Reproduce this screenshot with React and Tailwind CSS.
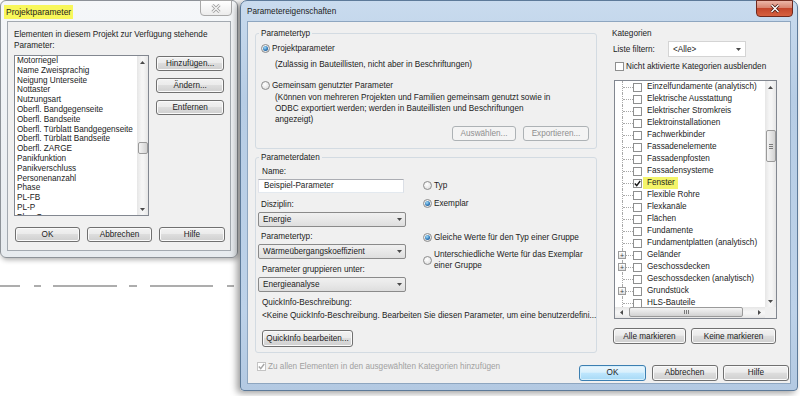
const leftItems = [
  "Motorriegel",
  "Name Zweisprachig",
  "Neigung Unterseite",
  "Nottaster",
  "Nutzungsart",
  "Oberfl. Bandgegenseite",
  "Oberfl. Bandseite",
  "Oberfl. Türblatt Bandgegenseite",
  "Oberfl. Türblatt Bandseite",
  "Oberfl. ZARGE",
  "Panikfunktion",
  "Panikverschluss",
  "Personenanzahl",
  "Phase",
  "PL-FB",
  "PL-P",
  "Plan-Gruppe",
];

const categories = [
  { name: "Einzelfundamente (analytisch)" },
  { name: "Elektrische Ausstattung" },
  { name: "Elektrischer Stromkreis" },
  { name: "Elektroinstallationen" },
  { name: "Fachwerkbinder" },
  { name: "Fassadenelemente" },
  { name: "Fassadenpfosten" },
  { name: "Fassadensysteme" },
  { name: "Fenster", checked: true, marked: true },
  { name: "Flexible Rohre" },
  { name: "Flexkanäle" },
  { name: "Flächen" },
  { name: "Fundamente" },
  { name: "Fundamentplatten (analytisch)" },
  { name: "Geländer", plus: true },
  { name: "Geschossdecken", plus: true },
  { name: "Geschossdecken (analytisch)" },
  { name: "Grundstück", plus: true },
  { name: "HLS-Bauteile" },
];

// small scrollbar / combo arrows
function Tri({ dir }) {
  if (dir === "up")
    return (
      <svg width="5" height="3" viewBox="0 0 5 3">
        <path d="M0 3 L2.5 0 L5 3Z" fill="#4a4a4a" />
      </svg>
    );
  if (dir === "down")
    return (
      <svg width="5" height="3" viewBox="0 0 5 3">
        <path d="M0 0 L5 0 L2.5 3Z" fill="#4a4a4a" />
      </svg>
    );
  if (dir === "left")
    return (
      <svg width="3" height="5" viewBox="0 0 3 5">
        <path d="M3 0 L3 5 L0 2.5Z" fill="#4a4a4a" />
      </svg>
    );
  return (
    <svg width="3" height="5" viewBox="0 0 3 5">
      <path d="M0 0 L3 2.5 L0 5Z" fill="#4a4a4a" />
    </svg>
  );
}

function Button({ children, className = "", disabled, focused }) {
  const look = disabled
    ? "border-[#adb2b5] bg-[#f4f4f4] text-[#8f8f8f]"
    : focused
    ? "border-[#3c7fb1] bg-[linear-gradient(#eaf6fd,#d9f0fc_45%,#bee6fd_50%,#a7d9f5)] shadow-[inset_0_0_0_1px_#d6effc]"
    : "border-[#707070] bg-[linear-gradient(#f2f2f2,#ebebeb_45%,#dddddd_50%,#cfcfcf)] shadow-[inset_0_0_0_1px_#fafafa]";
  return (
    <div
      className={`flex shrink-0 items-center justify-center whitespace-nowrap rounded-[3px] border ${look} ${className}`}
    >
      {children}
    </div>
  );
}

function Radio({ checked }) {
  return (
    <span className="flex h-[9px] w-[9px] shrink-0 items-center justify-center rounded-full border border-[#8c8c8c] bg-[radial-gradient(circle_at_40%_35%,#ffffff,#e4e4e4_70%,#cdcdcd)]">
      {checked && (
        <span className="h-[5px] w-[5px] rounded-full bg-[radial-gradient(circle_at_40%_35%,#a6e0fa,#2b74b5_60%,#15497c)]" />
      )}
    </span>
  );
}

function Check({ checked, disabled }) {
  return (
    <span
      className={`flex h-[9px] w-[9px] shrink-0 items-center justify-center border bg-white ${
        disabled ? "border-[#c4c4c4]" : "border-[#8e8f8f]"
      }`}
    >
      {checked && (
        <svg width="7" height="7" viewBox="0 0 7 7">
          <path
            d="M0.8 3.6 L2.7 5.6 L6.2 1"
            fill="none"
            stroke={disabled ? "#a6a6a6" : "#151515"}
            strokeWidth="1.4"
          />
        </svg>
      )}
    </span>
  );
}

function Combo({ value }) {
  return (
    <div className="flex h-[15px] w-[148px] items-center justify-between rounded-[2px] border border-[#8a8a8a] bg-[linear-gradient(#f0f0f0,#e8e8e8_50%,#dedede)] pl-[4px] pr-[3px]">
      <span className="whitespace-nowrap">{value}</span>
      <Tri dir="down" />
    </div>
  );
}

function VScroll({ thumb, grip }) {
  return (
    <div className="flex h-full w-[11px] shrink-0 flex-col bg-[linear-gradient(90deg,#e6e6e6,#f5f5f5_40%,#f5f5f5_60%,#e6e6e6)]">
      <div className="flex h-[12px] shrink-0 items-center justify-center">
        <Tri dir="up" />
      </div>
      <div className="flex-1">
        <div
          className={`mx-auto flex w-[10px] flex-col items-center justify-center gap-[1px] rounded-[2px] border border-[#9a9a9a] bg-[linear-gradient(90deg,#f4f4f4,#e2e2e2_55%,#d2d2d2)] ${thumb}`}
        >
          {grip && (
            <>
              <span className="h-px w-[4px] bg-[#7a7a7a]" />
              <span className="h-px w-[4px] bg-[#7a7a7a]" />
              <span className="h-px w-[4px] bg-[#7a7a7a]" />
            </>
          )}
        </div>
      </div>
      <div className="flex h-[12px] shrink-0 items-center justify-center">
        <Tri dir="down" />
      </div>
    </div>
  );
}

function HScroll() {
  return (
    <div className="flex h-[11px] flex-1 bg-[linear-gradient(#e6e6e6,#f5f5f5_40%,#f5f5f5_60%,#e6e6e6)]">
      <div className="flex w-[12px] shrink-0 items-center justify-center">
        <Tri dir="left" />
      </div>
      <div className="flex-1">
        <div className="ml-[2px] flex h-[10px] w-[114px] items-center justify-center gap-[1px] rounded-[2px] border border-[#9a9a9a] bg-[linear-gradient(#f4f4f4,#e2e2e2_55%,#d2d2d2)]">
          <span className="h-[4px] w-px bg-[#7a7a7a]" />
          <span className="h-[4px] w-px bg-[#7a7a7a]" />
          <span className="h-[4px] w-px bg-[#7a7a7a]" />
        </div>
      </div>
      <div className="flex w-[12px] shrink-0 items-center justify-center">
        <Tri dir="right" />
      </div>
    </div>
  );
}

function CloseX({ active }) {
  return (
    <svg width="10" height="9" viewBox="0 0 10 9">
      <path
        d="M1.5 1 L8.5 8 M8.5 1 L1.5 8"
        stroke={active ? "#4a1d14" : "#9c9c9c"}
        strokeWidth="3"
      />
      <path
        d="M1.5 1 L8.5 8 M8.5 1 L1.5 8"
        stroke={active ? "#ffffff" : "#f4f4f4"}
        strokeWidth="1.4"
      />
    </svg>
  );
}

function CategoryRow({ item }) {
  return (
    <div className="flex h-[12px] shrink-0 items-center">
      <span className="relative flex h-full w-[18px] shrink-0 items-center pl-[7px]">
        <span className="flex h-full w-[11px] items-center border-l border-dotted border-[#a8a8a8]">
          <span className="w-full border-t border-dotted border-[#a8a8a8]" />
        </span>
        {item.plus && (
          <span className="absolute left-[3px] top-[2px] flex h-[8px] w-[8px] items-center justify-center border border-[#9b9b9b] bg-[linear-gradient(#ffffff,#e0e0e0)] text-[7px] leading-none text-[#3c3c3c]">
            +
          </span>
        )}
      </span>
      <Check checked={item.checked} />
      <span
        className={`ml-[5px] whitespace-nowrap leading-[12px] ${
          item.marked ? "-ml-[0px] bg-[#f3f46a] pl-[0px] pr-[3px] shadow-[-4px_0_0_#f3f46a]" : ""
        }`}
      >
        {item.name}
      </span>
    </div>
  );
}

export default function App() {
  return (
    <div className="relative h-[396px] w-[800px] overflow-hidden bg-white font-['Liberation_Sans',Arial,sans-serif] text-[8.2px] leading-[11px] text-[#1c1c1c]">
      {/* background drawing line */}
      <svg className="absolute left-0 top-[284px]" width="240" height="4" viewBox="0 0 240 4">
        <path
          d="M0 2H20 M34 2H41 M53 2H117 M129 2H137 M150 2H213 M227 2H234"
          stroke="#5c5c5c"
          strokeWidth="1.2"
        />
      </svg>

      {/* Projektparameter dialog */}
      <div className="absolute left-0 top-0 flex h-[258px] w-[238px] flex-col rounded-[6px] border border-[#8d9298] bg-[linear-gradient(#f5f7f9,#e7ebef)] shadow-[1px_2px_5px_rgba(0,0,0,0.3)]">
        <div className="flex h-[20px] shrink-0 items-start justify-between pl-[3px] pr-[5px]">
          <span className="mt-[4px] bg-[#f8f75a] px-[2px] text-[8.5px] leading-[14px]">
            Projektparameter
          </span>
          <div className="-mt-[1px] flex h-[16px] w-[32px] items-center justify-center rounded-b-[4px] border border-[#a9a9a9] bg-[linear-gradient(#ffffff,#ececec)]">
            <CloseX />
          </div>
        </div>
        <div className="mx-[6px] mb-[6px] flex flex-1 flex-col border border-[#a3a9b0] bg-[#f0f0f0] px-[6px] pt-[7px]">
          <p>
            Elementen in diesem Projekt zur Verfügung stehende
            <br />
            Parameter:
          </p>
          <div className="mt-[4px] flex items-start">
            <div className="flex h-[161px] w-[136px] border border-[#828790] bg-white">
              <div className="flex-1 overflow-hidden pl-[2px] leading-[9.8px]">
                {leftItems.map((item) => (
                  <div key={item} className="whitespace-nowrap">
                    {item}
                  </div>
                ))}
              </div>
              <VScroll thumb="mt-[74px] h-[12px]" />
            </div>
            <div className="ml-[7px] flex w-[68px] flex-col gap-[7px] pt-[1px]">
              <Button className="h-[15px]">Hinzufügen...</Button>
              <Button className="h-[15px]">Ändern...</Button>
              <Button className="h-[15px]">Entfernen</Button>
            </div>
          </div>
          <div className="mt-[11px] flex gap-[7px] pl-[1px]">
            <Button className="h-[15px] w-[65px]">OK</Button>
            <Button className="h-[15px] w-[65px]">Abbrechen</Button>
            <Button className="h-[15px] w-[66px]">Hilfe</Button>
          </div>
        </div>
      </div>

      {/* Parametereigenschaften dialog */}
      <div className="absolute left-[240px] top-0 flex h-[391px] w-[558px] flex-col rounded-t-[7px] rounded-b-[4px] border border-[#5d7a99] bg-[linear-gradient(#c9dbee,#b7cde5_25%,#bdd2e9_80%,#b3c9e2)] shadow-[-3px_2px_7px_rgba(0,0,0,0.4)]">
        <div className="flex h-[20px] shrink-0 items-start justify-between pl-[6px] pr-[4px]">
          <span className="mt-[5px]">Parametereigenschaften</span>
          <div className="-mt-[1px] flex h-[17px] w-[37px] items-center justify-center rounded-b-[4px] border border-[#70291d] bg-[linear-gradient(#ecb6a8,#d88470_45%,#c4462c_50%,#d6613f)]">
            <CloseX active />
          </div>
        </div>

        <div className="mx-[6px] mb-[6px] flex flex-1 flex-col border border-[#8ea6c0] bg-[#f0f0f0]">
          <div className="flex items-start pl-[7px] pt-[5.5px]">
            {/* left column */}
            <div className="w-[342px] shrink-0">
              <fieldset className="rounded-[3px] border border-[#d3dbe2]">
                <legend className="ml-[3px] px-[2px]">Parametertyp</legend>
                <div className="pb-[7px] pl-[5px] pr-[7px] pt-[4px]">
                  <div className="flex items-center gap-[2px]">
                    <Radio checked />
                    <span>Projektparameter</span>
                  </div>
                  <p className="mt-[5px] pl-[14px]">
                    (Zulässig in Bauteillisten, nicht aber in Beschriftungen)
                  </p>
                  <div className="mt-[10px] flex items-center gap-[2px]">
                    <Radio />
                    <span>Gemeinsam genutzter Parameter</span>
                  </div>
                  <p className="mt-[1px] pl-[14px]">
                    (Können von mehreren Projekten und Familien gemeinsam genutzt sowie in
                    <br />
                    ODBC exportiert werden; werden in Bauteillisten und Beschriftungen
                    <br />
                    angezeigt)
                  </p>
                  <div className="mt-[1.5px] flex justify-end gap-[7px]">
                    <Button disabled className="h-[15px] w-[64px]">
                      Auswählen...
                    </Button>
                    <Button disabled className="h-[15px] w-[66px]">
                      Exportieren...
                    </Button>
                  </div>
                </div>
              </fieldset>

              <fieldset className="mt-[3px] rounded-[3px] border border-[#d3dbe2]">
                <legend className="ml-[3px] px-[2px]">Parameterdaten</legend>
                <div className="pb-[5.5px] pl-[2px] pt-[3px]">
                  <div className="flex items-start">
                    <div className="w-[148px] shrink-0">
                      <p className="pl-[4px]">Name:</p>
                      <div className="mt-[1.5px] flex h-[14px] w-[146px] items-center border border-[#abadb3] border-b-[#e3e9ef] border-l-[#e2e3ea] border-r-[#dbdfe6] bg-white pl-[5px]">
                        Beispiel-Parameter
                      </div>
                      <p className="mt-[6.5px] pl-[3px]">Disziplin:</p>
                      <div className="mt-[1.5px]">
                        <Combo value="Energie" />
                      </div>
                      <p className="mt-[4.5px] pl-[3px]">Parametertyp:</p>
                      <div className="mt-[1.5px]">
                        <Combo value="Wärmeübergangskoeffizient" />
                      </div>
                      <p className="mt-[5.5px] pl-[4px]">Parameter gruppieren unter:</p>
                      <div className="mt-[1.5px]">
                        <Combo value="Energieanalyse" />
                      </div>
                    </div>
                    <div className="ml-[17px] pt-[14px]">
                      <div className="flex items-center gap-[2px]">
                        <Radio />
                        <span>Typ</span>
                      </div>
                      <div className="mt-[7px] flex items-center gap-[2px]">
                        <Radio checked />
                        <span>Exemplar</span>
                      </div>
                      <div className="mt-[23px] flex items-center gap-[2px]">
                        <Radio checked />
                        <span>Gleiche Werte für den Typ einer Gruppe</span>
                      </div>
                      <div className="mt-[6px] flex items-center gap-[2px]">
                        <Radio />
                        <span>
                          Unterschiedliche Werte für das Exemplar
                          <br />
                          einer Gruppe
                        </span>
                      </div>
                    </div>
                  </div>
                  <p className="mt-[5.5px] pl-[4px]">QuickInfo-Beschreibung:</p>
                  <p className="mt-[2px] whitespace-nowrap pl-[4px]">
                    &lt;Keine QuickInfo-Beschreibung. Bearbeiten Sie diesen Parameter, um eine benutzerdefini...
                  </p>
                  <Button className="ml-[4px] mt-[8.5px] h-[17px] w-[91px]">
                    QuickInfo bearbeiten...
                  </Button>
                </div>
              </fieldset>
            </div>

            {/* Kategorien column */}
            <div className="ml-[15px] w-[166px] shrink-0">
              <p>Kategorien</p>
              <div className="mt-[2.5px] flex items-center">
                <span className="w-[56px] shrink-0 pl-[1px]">Liste filtern:</span>
                <div className="flex h-[16px] w-[78px] items-center justify-between border border-[#d4d4d4] bg-white pl-[4px] pr-[4px]">
                  <span>&lt;Alle&gt;</span>
                  <Tri dir="down" />
                </div>
              </div>
              <div className="mt-[3.5px] flex items-center gap-[2px] pl-[3px]">
                <Check />
                <span className="whitespace-nowrap">Nicht aktivierte Kategorien ausblenden</span>
              </div>
              <div className="ml-[2px] mt-[8.5px] flex h-[239px] w-[163px] flex-col border border-[#828790] bg-white">
                <div className="flex h-[226px] shrink-0">
                  <div className="flex flex-1 flex-col overflow-hidden">
                    {categories.map((item) => (
                      <CategoryRow key={item.name} item={item} />
                    ))}
                  </div>
                  <VScroll thumb="mt-[37px] h-[32px]" grip />
                </div>
                <div className="flex flex-1">
                  <HScroll />
                  <div className="w-[11px] shrink-0 bg-[#f0f0f0]" />
                </div>
              </div>
              <div className="ml-[1px] mt-[9px] flex gap-[5px]">
                <Button className="h-[16px] w-[73px]">Alle markieren</Button>
                <Button className="h-[16px] w-[85px]">Keine markieren</Button>
              </div>
            </div>
          </div>

          {/* bottom row */}
          <div className="mt-[8px] flex items-start pl-[9px] pr-[1px]">
            <div className="flex items-center gap-[2px] text-[#a0a0a0]">
              <Check checked disabled />
              <span>Zu allen Elementen in den ausgewählten Kategorien hinzufügen</span>
            </div>
            <div className="ml-auto mt-[3.5px] flex gap-[5.5px]">
              <Button focused className="h-[16px] w-[67px]">
                OK
              </Button>
              <Button className="h-[16px] w-[66px]">Abbrechen</Button>
              <Button className="h-[16px] w-[66px]">Hilfe</Button>
            </div>
          </div>
        </div>
      </div>
    </div>
  );
}
